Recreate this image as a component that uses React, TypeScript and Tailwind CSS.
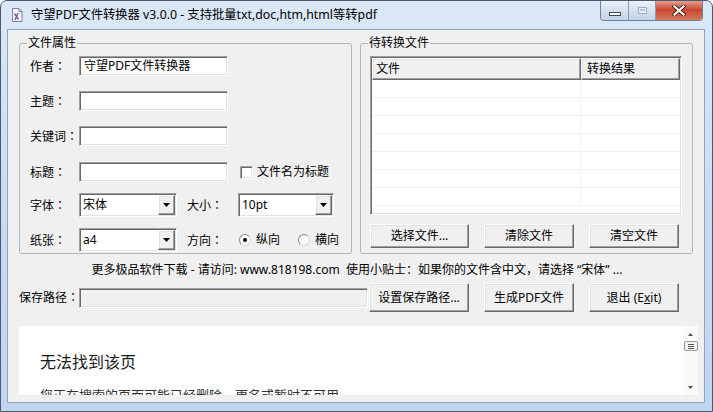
import React from "react";

// classic win32 3D edges
const sunken =
  "border border-t-[#a0a0a0] border-l-[#a0a0a0] border-r-white border-b-white shadow-[inset_1px_1px_0_#696969,inset_-1px_-1px_0_#e3e3e3]";
const raised =
  "border border-t-white border-l-white border-r-[#696969] border-b-[#696969] shadow-[inset_-1px_-1px_0_#a0a0a0,inset_1px_1px_0_#e3e3e3]";

function TextBox({ value, className = "" }: { value?: string; className?: string }) {
  return (
    <div className={`${sunken} h-[20px] flex items-center pl-[4px] whitespace-nowrap ${className}`}>
      {value}
    </div>
  );
}

function Combo({ value, className = "" }: { value: string; className?: string }) {
  return (
    <div className={`${sunken} bg-white h-[24px] flex items-stretch p-[1px] ${className}`}>
      <span className="flex-1 flex items-center pl-[2px]">{value}</span>
      <span className={`${raised} w-[17px] bg-[#f0f0f0] flex items-center justify-center`}>
        <svg width="7" height="4" viewBox="0 0 7 4">
          <path d="M0 0h7L3.5 4z" fill="#000" />
        </svg>
      </span>
    </div>
  );
}

function Radio({ checked }: { checked?: boolean }) {
  return (
    <span className="w-[12px] h-[12px] rounded-full border border-t-[#8a8a8a] border-l-[#8a8a8a] border-r-[#d8d8d8] border-b-[#d8d8d8] bg-white flex items-center justify-center">
      {checked && <span className="w-[4px] h-[4px] rounded-full bg-black" />}
    </span>
  );
}

function Btn({ children, className = "" }: { children: React.ReactNode; className?: string }) {
  return (
    <button
      className={`${raised} bg-[#f0f0f0] flex items-center justify-center text-[12px] leading-none text-black ${className}`}
    >
      {children}
    </button>
  );
}

// label with a centred full-width colon, like YaHei draws it
function Label({ text, className = "" }: { text: string; className?: string }) {
  return (
    <span className={`leading-[16px] whitespace-nowrap ${className}`}>
      {text}
      <span className="font-['Noto_Sans_CJK_TC',sans-serif]">：</span>
    </span>
  );
}

function GroupBox({ title, children }: { title: string; children: React.ReactNode }) {
  return (
    <div className="relative w-[333px] h-[211px] border border-[#b4b4b4] rounded-[3px] pt-[12px]">
      <span className="absolute -top-[9px] left-[7px] px-[1px] bg-[#f0f0f0] leading-[16px]">{title}</span>
      {children}
    </div>
  );
}

const label = "leading-[16px] whitespace-nowrap";

function LeftGroup() {
  return (
    <GroupBox title="文件属性">
      <div className="flex flex-col pl-[10px]">
        <div className="flex items-center h-[20px]">
          <Label text="作者" className="w-[49px]" />
          <TextBox value="守望PDF文件转换器" className="w-[149px] bg-white" />
        </div>
        <div className="flex items-center h-[20px] mt-[15px]">
          <Label text="主题" className="w-[49px]" />
          <TextBox className="w-[149px] bg-white" />
        </div>
        <div className="flex items-center h-[20px] mt-[15px]">
          <Label text="关键词" className="w-[49px]" />
          <TextBox className="w-[149px] bg-white" />
        </div>
        <div className="flex items-center h-[20px] mt-[16px]">
          <Label text="标题" className="w-[49px]" />
          <TextBox className="w-[149px] bg-white" />
          <span className={`${sunken} ml-[12px] w-[13px] h-[13px] bg-white`} />
          <span className={`${label} ml-[4px]`}>文件名为标题</span>
        </div>
        <div className="flex items-center h-[24px] mt-[11px]">
          <Label text="字体" className="w-[49px]" />
          <Combo value="宋体" className="w-[98px]" />
          <Label text="大小" className="ml-[10px] w-[51px]" />
          <Combo value="10pt" className="w-[96px]" />
        </div>
        <div className="flex items-center h-[24px] mt-[11px]">
          <Label text="纸张" className="w-[49px]" />
          <Combo value="a4" className="w-[98px]" />
          <Label text="方向" className="ml-[10px] w-[52px]" />
          <Radio checked />
          <span className={`${label} ml-[5px]`}>纵向</span>
          <span className="ml-[18px]">
            <Radio />
          </span>
          <span className={`${label} ml-[5px]`}>横向</span>
        </div>
      </div>
    </GroupBox>
  );
}

function RightGroup() {
  const rows = Array.from({ length: 7 });
  return (
    <GroupBox title="待转换文件">
      <div className="pl-[9px]">
        <div className={`${sunken} w-[312px] h-[159px] bg-white p-[1px] overflow-hidden flex flex-col`}>
          <div className="flex h-[22px] shrink-0">
            <div className={`${raised} w-[209px] bg-[#f0f0f0] flex items-center pl-[3px] leading-[16px]`}>文件</div>
            <div className={`${raised} flex-1 bg-[#f0f0f0] flex items-center pl-[5px] leading-[16px]`}>转换结果</div>
          </div>
          {rows.map((_, i) => (
            <div key={i} className="flex h-[18px] shrink-0 border-b border-[#f0f0f0]">
              <div className="w-[209px] border-r border-[#f0f0f0]" />
              <div className="flex-1" />
            </div>
          ))}
        </div>
        <div className="flex mt-[9px] gap-[15px]">
          <Btn className="w-[99px] h-[24px]">选择文件...</Btn>
          <Btn className="w-[90px] h-[24px]">清除文件</Btn>
          <Btn className="w-[90px] h-[24px]">清空文件</Btn>
        </div>
      </div>
    </GroupBox>
  );
}

function WindowIcon() {
  return (
    <svg width="14" height="16" viewBox="0 0 14 16">
      <path d="M2.5 1.5h6.5l3 3v10h-9.5z" fill="#f5f5f9" stroke="#80808f" />
      <path d="M9 1.5v3h3" fill="none" stroke="#80808f" />
      <path d="M4.5 6.5l4 6M8 6l-3 7" stroke="#7456a8" strokeWidth="1.4" />
    </svg>
  );
}

function CaptionButtons() {
  return (
    <div className="flex -mt-[1px] h-[21px] rounded-b-[4px] border border-t-0 border-[#6f8199] overflow-hidden">
      <div className="w-[28px] bg-gradient-to-b from-[#eef3fa] via-[#d6e2f0] to-[#c2d3e7] border-r border-[#8a9cb3] flex items-end justify-center pb-[4px]">
        <span className="w-[12px] h-[4px] bg-white border border-[#3b4656]" />
      </div>
      <div className="w-[27px] bg-gradient-to-b from-[#eef3fa] via-[#d6e2f0] to-[#c2d3e7] border-r border-[#8a9cb3] flex items-center justify-center">
        <span className="w-[9px] h-[7px] border border-[#9fb0c4] bg-[#e6edf6] flex items-center justify-center">
          <span className="w-[5px] h-[2px] border border-[#b3c1d2]" />
        </span>
      </div>
      <div className="w-[46px] bg-gradient-to-b from-[#eaa597] via-[#c8472f] to-[#d8765c] flex items-center justify-center">
        <svg width="14" height="11" viewBox="0 0 14 11">
          <path d="M2.5 1.5l9 8M11.5 1.5l-9 8" stroke="#4a2018" strokeWidth="4" strokeLinecap="square" />
          <path d="M2.5 1.5l9 8M11.5 1.5l-9 8" stroke="#fff" strokeWidth="2.2" strokeLinecap="square" />
        </svg>
      </div>
    </div>
  );
}

function WebPane() {
  return (
    <div className="ml-[11px] mt-[14px] w-[679px] h-[69px] bg-white flex overflow-hidden">
      <div className="flex-1 pl-[21px] pt-[25px] flex flex-col">
        <span className="text-[16px] leading-[22px] text-[#1a1a1a] whitespace-nowrap">无法找到该页</span>
        <span className="mt-[14px] text-[13px] leading-[16px] text-[#333] whitespace-nowrap">
          您正在搜索的页面可能已经删除、更名或暂时不可用。
        </span>
      </div>
      <div className="w-[15px] bg-[#fafafa] flex flex-col items-center pt-[7px] pb-[6px]">
        <svg width="5" height="3" viewBox="0 0 5 3">
          <path d="M0 3h5L2.5 0z" fill="#505050" />
        </svg>
        <span className="mt-[5px] w-[14px] h-[10px] rounded-[2px] border border-[#9a9a9a] bg-[#f4f4f4] flex flex-col items-center justify-center gap-[1px]">
          <span className="w-[6px] h-[1px] bg-[#555]" />
          <span className="w-[6px] h-[1px] bg-[#555]" />
          <span className="w-[6px] h-[1px] bg-[#555]" />
        </span>
        <div className="flex-1" />
        <svg width="5" height="3" viewBox="0 0 5 3">
          <path d="M0 0h5L2.5 3z" fill="#505050" />
        </svg>
      </div>
    </div>
  );
}

export default function App() {
  return (
    <div className="w-[713px] h-[412px] font-['Noto_Sans','Noto_Sans_CJK_SC',sans-serif] text-[12px] text-black">
      <div className="w-[713px] h-[412px] flex flex-col border border-[#4b5b6f] rounded-t-[7px] bg-gradient-to-b from-[#dbe8f7] via-[#c9dcf2] to-[#c0d5ee] overflow-hidden">
        {/* title bar */}
        <div className="h-[28px] flex items-start shrink-0">
          <div className="ml-[9px] mt-[6px]">
            <WindowIcon />
          </div>
          <span className="ml-[7px] mt-[6px] leading-[16px] text-[12.3px] whitespace-nowrap">
            守望PDF文件转换器 v3.0.0 - 支持批量txt,doc,htm,html等转pdf
          </span>
          <div className="flex-1" />
          <div className="mr-[9px]">
            <CaptionButtons />
          </div>
        </div>

        {/* client area */}
        <div className="ml-[6px] w-[698px] h-[374px] border border-[#8ea4bf]">
          <div className="w-[696px] h-[372px] bg-[#f0f0f0] flex flex-col">
            <div className="flex mt-[13px] pl-[11px] gap-[8px]">
              <LeftGroup />
              <RightGroup />
            </div>

            <div className="mt-[8px] leading-[16px] text-center whitespace-pre pl-[2px]">
              {"更多极品软件下载 - 请访问: www.818198.com  使用小贴士："}
              <span>{"如果你的文件含中文，请选择 “宋体” ..."}</span>
            </div>

            <div className="mt-[5px] h-[29px] flex items-center pl-[11px]">
              <Label text="保存路径" className="w-[60px]" />
              <TextBox className="w-[289px] bg-[#f0f0f0]" />
              <Btn className="ml-[1px] w-[100px] h-[29px]">设置保存路径...</Btn>
              <Btn className="ml-[15px] w-[90px] h-[29px]">生成PDF文件</Btn>
              <Btn className="ml-[15px] w-[90px] h-[29px]">
                <span>
                  退出 (E<span className="underline">x</span>it)
                </span>
              </Btn>
            </div>

            <WebPane />
          </div>
        </div>
      </div>
    </div>
  );
}
